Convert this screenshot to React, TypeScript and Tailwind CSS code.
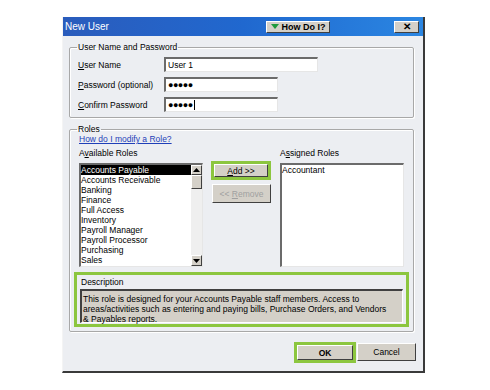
import React from "react";

// ------------ Data ------------
const availableRoles = [
  "Accounts Payable",
  "Accounts Receivable",
  "Banking",
  "Finance",
  "Full Access",
  "Inventory",
  "Payroll Manager",
  "Payroll Processor",
  "Purchasing",
  "Sales",
];

function cn(...cls: (string | false | null | undefined)[]) {
  return cls.filter(Boolean).join(" ");
}

// sunken white field, classic win look
const sunken =
  "border-t-2 border-l-2 border-r border-b border-t-[#6b6b6b] border-l-[#6b6b6b] border-r-[#e6e6e6] border-b-[#e6e6e6] bg-white";

const raised =
  "border border-t-white border-l-white border-r-[#404040] border-b-[#404040] bg-[#d4d0c8]";

function Acc({ k, rest }: { k: string; rest: string }) {
  return (
    <span>
      <span className="underline">{k}</span>
      {rest}
    </span>
  );
}

function FieldRow({
  label,
  width,
  children,
}: {
  label: React.ReactNode;
  width: string;
  children: React.ReactNode;
}) {
  return (
    <div className="flex h-[15px] items-center">
      <div className="w-[86px] shrink-0">{label}</div>
      <div className={cn("flex h-[15px] items-center pl-[2px]", sunken, width)}>
        {children}
      </div>
    </div>
  );
}

function Dots() {
  return (
    <span className="text-[9px] font-bold leading-none tracking-[-0.5px]">
      ●●●●●
    </span>
  );
}

function Arrow({ up }: { up?: boolean }) {
  return (
    <svg width="7" height="4" viewBox="0 0 7 4">
      {up ? (
        <polygon points="0,4 3.5,0 7,4" fill="#000" />
      ) : (
        <polygon points="0,0 3.5,4 7,0" fill="#000" />
      )}
    </svg>
  );
}

export default function App() {
  return (
    <div className="h-[390px] w-[490px] bg-white pl-[62px] pt-[17px] font-['Liberation_Sans',Arial,sans-serif] text-[8.5px] leading-[10px] text-black">
      <div className="flex h-[356px] w-[363px] flex-col border-b-2 border-r-2 border-l border-b-[#3a3a3a] border-r-[#3a3a3a] border-l-[#f4f4f4] bg-[#eceef2]">
        {/* Title bar */}
        <div className="flex h-[19px] items-center bg-gradient-to-r from-[#2a5cbc] via-[#2068cf] to-[#2b86e2] pl-[2px] pr-[4px]">
          <span className="text-[10px] text-white">New User</span>
          <div
            className={cn(
              "ml-auto flex h-[12px] w-[64px] items-center justify-center gap-[3px]",
              raised
            )}
          >
            <svg width="8" height="5" viewBox="0 0 8 5">
              <polygon points="0,0 4,5 8,0" fill="#1e9a3c" />
            </svg>
            <span className="text-[9px] font-bold">How Do I?</span>
          </div>
          <div
            className={cn(
              "ml-[64px] flex h-[12px] w-[25px] items-center justify-center text-[10px] font-bold",
              raised
            )}
          >
            ✕
          </div>
        </div>

        {/* User name & password */}
        <fieldset className="ml-[6px] mt-[6px] w-[345px] rounded-[2px] border border-[#a8a8a8] p-0 pb-[5px] pl-[8px] pt-[5px] shadow-[inset_1px_1px_0_#fff,1px_1px_0_#fff]">
          <legend className="ml-[-1px] px-[1px]">User Name and Password</legend>
          <div className="flex flex-col gap-[5px]">
            <FieldRow label={<Acc k="U" rest="ser Name" />} width="w-[154px]">
              <span>User 1</span>
            </FieldRow>
            <FieldRow
              label={<Acc k="P" rest="assword (optional)" />}
              width="w-[114px]"
            >
              <Dots />
            </FieldRow>
            <FieldRow
              label={<Acc k="C" rest="onfirm Password" />}
              width="w-[114px]"
            >
              <Dots />
              <span className="ml-[1px] h-[10px] w-px bg-black" />
            </FieldRow>
          </div>
        </fieldset>

        {/* Roles */}
        <fieldset className="ml-[6px] mt-[6px] w-[345px] rounded-[2px] border border-[#a8a8a8] p-0 pb-[4px] pl-[4px] shadow-[inset_1px_1px_0_#fff,1px_1px_0_#fff]">
          <legend className="ml-[3px] px-[1px]">Roles</legend>
          <div className="pl-[5px]">
            <span className="text-[#1f3fb8] underline">How do I modify a Role?</span>
          </div>

          <div className="mt-[4px] flex pl-[5px]">
            {/* Available */}
            <div className="flex w-[124px] flex-col">
              <span>
                A<span className="underline">v</span>ailable Roles
              </span>
              <div className={cn("mt-[5px] flex h-[104px]", sunken)}>
                <div className="flex flex-1 flex-col">
                  {availableRoles.map((r, i) => (
                    <div
                      key={r}
                      className={cn(
                        "h-[10px] whitespace-nowrap",
                        i === 0 && "bg-black text-white"
                      )}
                    >
                      {r}
                    </div>
                  ))}
                </div>
                <div className="flex w-[11px] flex-col bg-[#efefef]">
                  <div className={cn("flex h-[10px] items-center justify-center", raised)}>
                    <Arrow up />
                  </div>
                  <div className={cn("h-[14px]", raised)} />
                  <div className="flex-1" />
                  <div className={cn("flex h-[11px] items-center justify-center", raised)}>
                    <Arrow />
                  </div>
                </div>
              </div>
            </div>

            {/* Add / Remove */}
            <div className="ml-[8px] flex w-[60px] flex-col gap-[4px] pt-[13px]">
              <div className="border-[3px] border-[#8cc63f]">
                <div className={cn("flex h-[13px] items-center justify-center", raised)}>
                  <Acc k="A" rest="dd >>" />
                </div>
              </div>
              <div
                className={cn(
                  "ml-[1px] flex h-[19px] items-center justify-center text-[#a0a0a0]",
                  raised
                )}
              >
                <span>
                  &lt;&lt; <span className="underline">R</span>emove
                </span>
              </div>
            </div>

            {/* Assigned */}
            <div className="ml-[9px] flex w-[124px] flex-col">
              <span>
                A<span className="underline">s</span>signed Roles
              </span>
              <div className={cn("mt-[5px] h-[104px]", sunken)}>Accountant</div>
            </div>
          </div>

          {/* Description */}
          <div className="mt-[5px] w-[335px] border-[3px] border-[#8cc63f] px-[3px] pb-[1px] pt-[2px]">
            <div className="pl-[1px]">Description</div>
            <div className="mt-[2px] h-[34px] whitespace-nowrap border-b border-l-2 border-r border-t-2 border-b-white border-l-[#404040] border-r-white border-t-[#404040] bg-[#d4d0c8] pl-[1px] pt-[3px]">
              This role is designed for your Accounts Payable staff members. Access to
              <br />
              areas/activities such as entering and paying bills, Purchase Orders, and Vendors
              <br />
              &amp; Payables reports.
            </div>
          </div>
        </fieldset>

        {/* Footer buttons */}
        <div className="mt-[10px] flex items-start justify-end pr-[7px]">
          <div className="border-[3px] border-[#8cc63f]">
            <div
              className={cn(
                "flex h-[15px] w-[56px] items-center justify-center font-bold",
                raised
              )}
            >
              OK
            </div>
          </div>
          <div
            className={cn(
              "ml-[1px] mt-[1px] flex h-[18px] w-[59px] items-center justify-center",
              raised
            )}
          >
            Cancel
          </div>
        </div>
      </div>
    </div>
  );
}
